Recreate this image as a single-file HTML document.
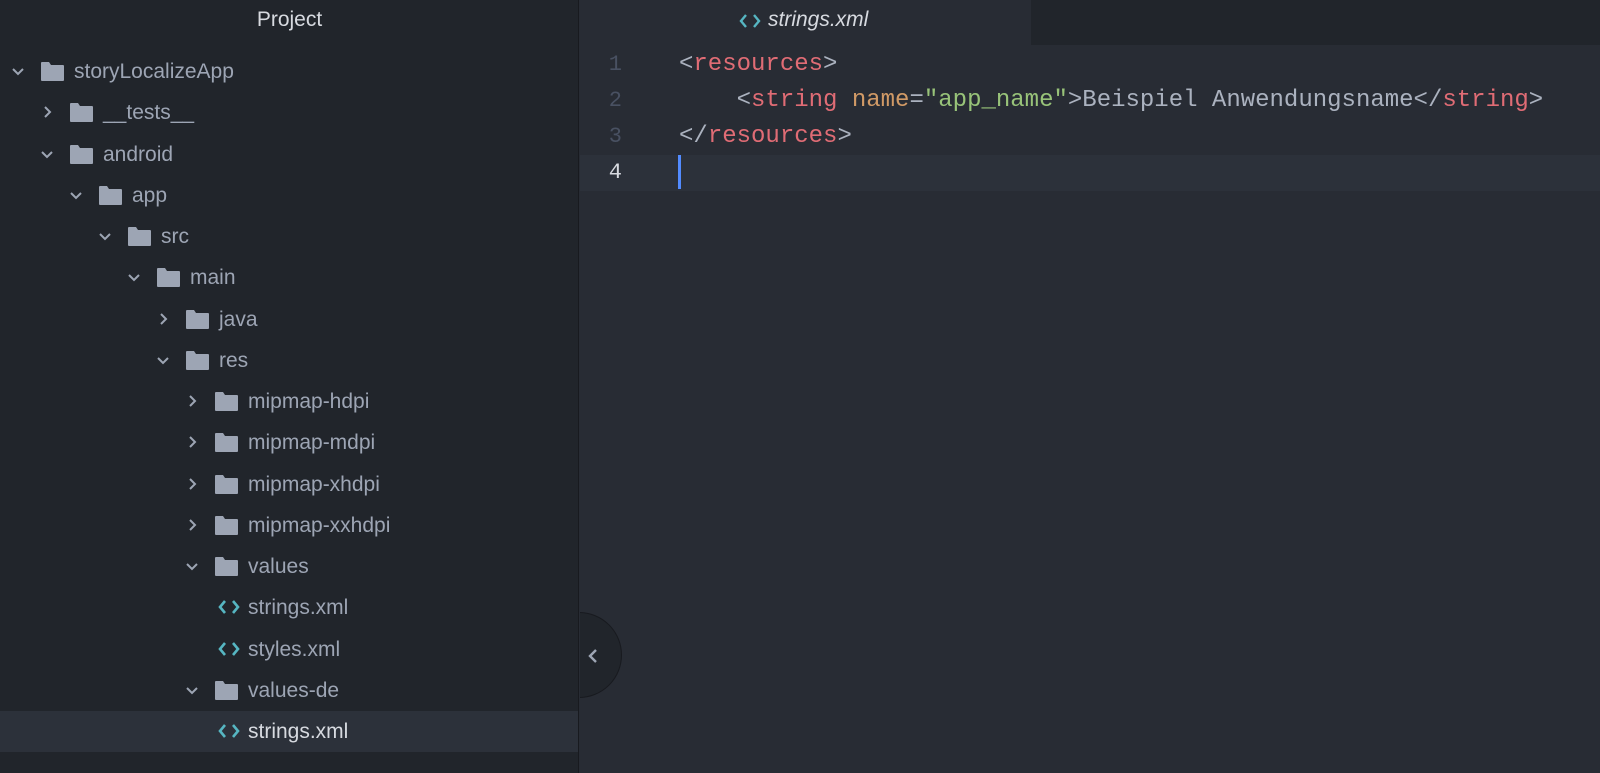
<!DOCTYPE html>
<html><head><style>
*{margin:0;padding:0;box-sizing:border-box}
body{width:1600px;height:773px;background:#282c34;position:relative;overflow:hidden;font-family:"Liberation Sans",sans-serif}
#side{position:absolute;left:0;top:0;width:579px;height:773px;background:#21252b;border-right:1px solid #181a1f}
#side .title{position:absolute;top:0;left:0;width:579px;height:40px;line-height:40px;text-align:center;color:#d7dae0;font-size:21px}
.row{position:absolute;left:0;width:578px;height:41px;color:#9da5b4;font-size:21px}
.row.sel{background:#2c313a;color:#d7dae0}
.row span{position:absolute;top:0;line-height:41px}
.chev{position:absolute;top:14px;width:12px;height:12px}
.fold{position:absolute;top:10px;width:24px;height:20px}
.xml{position:absolute;top:10px;width:24px;height:20px}
#tabs{position:absolute;left:580px;top:0;width:1020px;height:45px;background:#21252b}
#tab{position:absolute;left:0;top:0;width:451px;height:45px;background:#282c34}
#tab span{position:absolute;left:188px;top:8px;font-style:italic;color:#d7dae0;font-size:21px}
.code{position:absolute;font-family:"Liberation Mono",monospace;font-size:24px;line-height:36px;white-space:pre;color:#abb2bf}
.ln{position:absolute;left:580px;width:42px;text-align:right;font-family:"Liberation Mono",monospace;font-size:22px;line-height:36px;color:#495162}
.t{color:#e06c75}.a{color:#d19a66}.s{color:#98c379}
#hl{position:absolute;left:580px;top:155px;width:1020px;height:36px;background:#2c313a}
#cur{position:absolute;left:678px;top:155px;width:3px;height:34px;background:#528bff}
#btn{position:absolute;left:536px;top:612px;width:86px;height:86px;border-radius:50%;background:#21252b;border:1px solid #181a1f;clip-path:inset(0 0 0 44px)}
</style></head><body>
<div id="side"><div class="title">Project</div></div>
<div id="tabs"><div id="tab">
<svg style="position:absolute;left:159px;top:13px" width="22" height="16" viewBox="0 0 22 16"><path d="M7 2 L2 8 L7 14 M15 2 L20 8 L15 14" stroke="#56b6c2" stroke-width="2.4" fill="none"/></svg>
<span>strings.xml</span></div></div>
<div id="hl"></div><div id="cur"></div>
<div class="ln" style="top:47px">1</div>
<div class="ln" style="top:83px">2</div>
<div class="ln" style="top:119px">3</div>
<div class="ln" style="top:155px;color:#d7dae0">4</div>
<div class="code" style="left:679px;top:47px">&lt;<span class="t">resources</span>&gt;</div>
<div class="code" style="left:679px;top:83px">    &lt;<span class="t">string</span> <span class="a">name</span>=<span class="s">"app_name"</span>&gt;Beispiel Anwendungsname&lt;/<span class="t">string</span>&gt;</div>
<div class="code" style="left:679px;top:119px">&lt;/<span class="t">resources</span>&gt;</div>
<div id="btn"><svg style="position:absolute;left:50px;top:35px" width="12" height="16" viewBox="0 0 12 16"><path d="M9 2 L3 8 L9 14" stroke="#9da5b4" stroke-width="2.4" fill="none"/></svg></div>
<div id="tree"></div>
<script>
var rows=[[0,'o','storyLocalizeApp'],[1,'c','__tests__'],[1,'o','android'],[2,'o','app'],[3,'o','src'],[4,'o','main'],[5,'c','java'],[5,'o','res'],[6,'c','mipmap-hdpi'],[6,'c','mipmap-mdpi'],[6,'c','mipmap-xhdpi'],[6,'c','mipmap-xxhdpi'],[6,'o','values'],[7,'f','strings.xml'],[7,'f','styles.xml'],[6,'o','values-de'],[7,'f','strings.xml']];
var h='';
rows.forEach(function(r,i){
 var x=29*r[0];
 h+='<div class="row'+(i==16?' sel':'')+'" style="top:'+Math.round(51+i*41.25)+'px">';
 if(r[1]=='f'){
  h+='<svg class="xml" style="left:'+(x+14)+'px" viewBox="0 0 24 20"><path d="M8 4 L3 10 L8 16 M16 4 L21 10 L16 16" stroke="#56b6c2" stroke-width="2.6" fill="none"/></svg><span style="left:'+(x+45)+'px">'+r[2]+'</span>';
 }else{
  var p=r[1]=='o'?'M1 4 L6 9 L11 4':'M4 1 L9 6 L4 11';
  h+='<svg class="chev" style="left:'+(x+12)+'px" viewBox="0 0 12 12"><path d="'+p+'" stroke="#9da5b4" stroke-width="2" fill="none"/></svg>';
  h+='<svg class="fold" style="left:'+(x+40)+'px" viewBox="0 0 24 20"><path d="M1 2 Q1 1 2 1 L9 1 L11 4 L23 4 Q24 4 24 5 L24 19 Q24 20 23 20 L2 20 Q1 20 1 19 Z" fill="#9da5b4"/></svg>';
  h+='<span style="left:'+(x+74)+'px">'+r[2]+'</span>';
 }
 h+='</div>';
});
document.getElementById('tree').innerHTML=h;
</script>
</body></html>
